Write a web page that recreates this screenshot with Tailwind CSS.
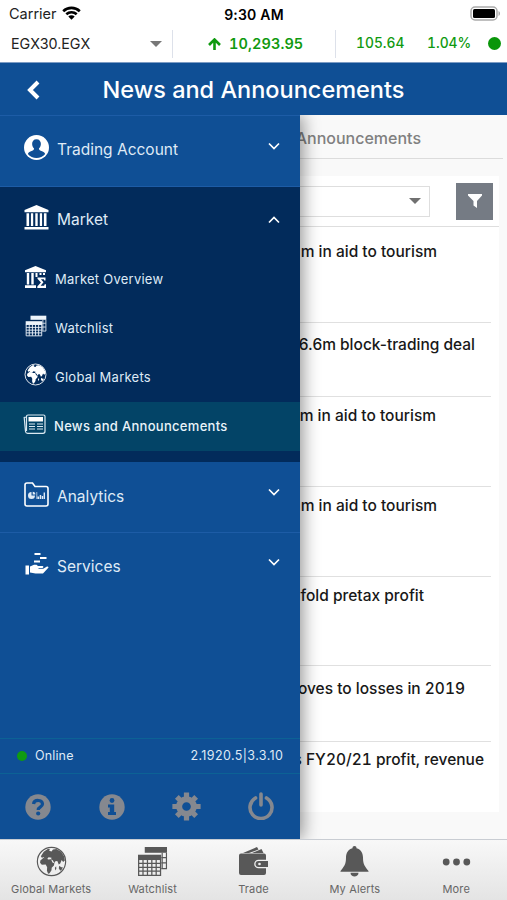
<!DOCTYPE html>
<html lang="en">

<head>
    <meta charset="UTF-8">
    <meta name="viewport" content="width=device-width, initial-scale=1.0">
    <title>News and Announcements</title>
    <script src="https://cdn.jsdelivr.net/npm/@tailwindcss/browser@4"></script>
</head>

<body class="w-[507px] h-[900px] overflow-hidden flex flex-col bg-white font-['Inter',sans-serif] text-[#222]">
    <!-- Shared icons -->
    <svg class="hidden">
        <symbol id="i-globe" viewBox="0 0 32 32">
            <circle cx="16" cy="16" r="14.6" fill="none" stroke="currentColor" stroke-width="1.2" />
            <path fill="currentColor" d="M5 10.500L8 6l4.500-3.200 2 .7-1 1.500 2.500.6 1.500-2L21 3l5 3 3.200 5 .6 4-1.800 1.500-1.500-2-1.500 3.500-1.500 1-1.500-3.500-2 .2-1 1.800-2-3-1.500-.5.5-2-3-.5-1.500 1.800-2.500-.2-1-1.500-2 .5z" />
            <path fill="currentColor" d="M4.500 15l3-2.600 3.500.3 1.500 1.300 3-.2 1.500 3.200 2 .8-.5 2.200-2.300 2.500-.2 2.500-2 3.200-1.500.5-1.200-3.200.2-3.500-1.500-2.800-4 .2-1.800-2z" />
            <path fill="currentColor" d="M19.500 22.500l1.300-1.500.2 2.500-1.200 1.700zM24 20.500l2 1.500 1.500-.2-.5 2.200-2 1.500-1.500-2.500z" />
        </symbol>
        <symbol id="i-tables" viewBox="0 0 32 32">
            <path fill="currentColor" d="M8 1h23v6H8z" />
            <path fill="none" stroke="currentColor" stroke-width="1.200" d="M30.400 7v16.400H25M26 7v16M25 12h5M25 17.500h5" />
            <path fill="currentColor" d="M1 9h24v5.500H1z" />
            <path fill="none" stroke="currentColor" stroke-width="1.300" d="M1.700 14v16.300h22.600V14M1.700 18h22.600M1.700 22h22.600M1.700 26h22.600M6.200 14v16M10.800 14v16M15.300 14v16M19.800 14v16" />
        </symbol>
        <symbol id="i-down" viewBox="0 0 12 8">
            <path fill="none" stroke="currentColor" stroke-width="1.700" d="M1 1.500l5 5 5-5" />
        </symbol>
    </svg>

    <!-- Status bar -->
    <div class="h-7 shrink-0 grid grid-cols-3 items-center pl-[9px] pr-[7px] text-[14.500px]">
        <div class="flex items-center gap-[5px]">
            <span>Carrier</span>
            <svg class="w-[19px] h-[14px] -mt-[2px] text-black" viewBox="0 0 19 14" fill="none" stroke="currentColor" stroke-width="2.600">
                <path d="M1.200 5.200a12 12 0 0 1 16.600 0M4.300 8.300a7.600 7.600 0 0 1 10.400 0" />
                <path d="M6.300 10.600a4.600 4.600 0 0 1 6.400 0L9.500 13.800z" fill="currentColor" stroke="none" />
            </svg>
        </div>
        <div class="text-center font-semibold text-[14px] tracking-[0.200px] -ml-[1px] text-black">9:30 AM</div>
        <svg class="w-[30px] h-[15px] -mt-[2px] justify-self-end" viewBox="0 0 30 15">
            <rect x="1" y="1" width="26" height="13" rx="4" fill="none" stroke="#aaa" stroke-width="1.500" />
            <rect x="3" y="3" width="22" height="9" rx="1.500" fill="#000" />
            <path d="M28.500 5c2 1 2 4 0 5z" fill="#aaa" />
        </svg>
    </div>

    <!-- Ticker -->
    <div class="h-[34px] shrink-0 flex items-start pt-[2px] text-[14.500px] text-[#109a10]">
        <div class="w-[173px] h-7 flex items-center justify-between pl-[11px] pr-[10px] pb-[1px] border-r border-[#dde1ea] text-[#222]">
            <span class="text-[14.300px]">EGX30.EGX</span>
            <svg class="w-3 h-[6px] text-[#777]" viewBox="0 0 12 6"><path fill="currentColor" d="M0 0h12L6 6z" /></svg>
        </div>
        <div class="w-[163px] h-7 flex items-center gap-[8px] pl-[35px] pb-[1px] border-r border-[#dde1ea] font-semibold tabular-nums">
            <svg class="w-[13px] h-3" viewBox="0 0 13 12" fill="none" stroke="currentColor" stroke-width="2.600"><path d="M6.500 12V2M1 7l5.500-5.500L12 7" /></svg>
            <span class="tracking-[0.100px]">10,293.95</span>
        </div>
        <div class="flex-1 h-7 flex items-center pl-5 pr-[6px] pb-[1px] font-medium text-[13.800px] tabular-nums">
            <span class="w-[71px]">105.64</span>
            <span>1.04%</span>
            <span class="ml-auto w-[13px] h-[13px] rounded-full bg-[#0a960a]"></span>
        </div>
    </div>

    <!-- Title bar -->
    <header class="h-[53px] shrink-0 grid grid-cols-[102px_1fr_102px] items-center pt-[2px] border-t border-[#7d9cc4] bg-[#0f4f95] text-white">
        <svg class="w-[14px] h-5 ml-[26px]" viewBox="0 0 14 20" fill="none" stroke="currentColor" stroke-width="4"><path d="M12 2l-8 8 8 8" /></svg>
        <h1 class="text-center text-[23.500px] font-medium whitespace-nowrap">News and Announcements</h1>
    </header>

    <div class="flex-1 min-h-0 flex overflow-hidden">
        <!-- Drawer -->
        <aside class="w-[300px] shrink-0 flex flex-col relative z-10 bg-[#0f4f95] text-[#dfeaf6] text-[15.500px] border-t border-[#1d5ca6] shadow-[3px_0_16px_rgba(0,0,0,0.42)]">
            <div class="h-[70px] flex items-center pl-6 pr-5 pb-[8px]">
                <svg class="w-[25px] h-[25px]" viewBox="0 0 24 24">
                    <circle cx="12" cy="12" r="12" fill="#fff" />
                    <path fill="#0f4f95" d="M12 4c2.800 0 4.300 2 4.200 4.700-.1 1.900-.9 3.400-1.900 4.300.1 1.600 1.200 2 3 2.700 1.500.6 2.500 1.300 3 2.600-4 5-12.600 5-16.600 0 .5-1.300 1.500-2 3-2.600 1.800-.7 2.900-1.100 3-2.700-1-.9-1.800-2.400-1.900-4.300C7.700 6 9.200 4 12 4z" />
                </svg>
                <span class="ml-[8px] mt-[5px]">Trading Account</span>
                <svg class="w-3 h-2 ml-auto -mt-[3px] text-white"><use href="#i-down" /></svg>
            </div>

            <div class="h-[276px] bg-[#022b5b] border-t border-[#1d5ca6]">
                <div class="h-[68px] flex items-center pl-6 pr-5 pb-[6px]">
                    <svg class="w-[25px] h-[25px] -mt-[2px]" viewBox="0 0 25 25" fill="#fff">
                        <path d="M12.500 0L24.500 5v2.200H.5V5zM.5 22h24v2.500H.5zM2.500 8.200h2.600V21H2.500zM6.900 8.200h2.300V21H6.900zM11.300 8.200h2.400V21h-2.400zM15.800 8.200h2.300V21h-2.300zM19.900 8.200h2.600V21h-2.600z" />
                    </svg>
                    <span class="ml-[8px] mt-[3px]">Market</span>
                    <svg class="w-3 h-2 ml-auto mt-[3px] rotate-180 text-white"><use href="#i-down" /></svg>
                </div>
                <div class="text-[13px] tracking-[0.250px]">
                    <div class="h-[49px] flex items-center pl-[25px]">
                        <svg class="w-[22px] h-[22px] -mt-[5px]" viewBox="0 0 22 22" fill="#fff">
                            <path d="M10.500 0L21 4.300v2H0v-2zM1.800 7h2.400v11.500H1.800zM6.300 7h2.400v11.500H6.300zM10.500 7h2v4h-2zM14.500 7h2v2h-2zM18 7h2v2h-2zM0 19.300h11V22H0z" />
                            <path d="M12.500 11.500h8v3h-1.200l-.4-1.200h-3l2.600 3-2.900 3.400h3.500l.6-1.500H21V22h-8.700v-1.400l3.600-4.100-3.400-3.800z" />
                        </svg>
                        <span class="ml-2">Market Overview</span>
                    </div>
                    <div class="h-[49px] flex items-center pl-[25px]">
                        <svg class="w-[22px] h-[22px] -mt-[6px] text-[#edf4fb]"><use href="#i-tables" /></svg>
                        <span class="ml-2">Watchlist</span>
                    </div>
                    <div class="h-[49px] flex items-center pl-6">
                        <svg class="w-[23px] h-[23px] -mt-[6px] text-white"><use href="#i-globe" /></svg>
                        <span class="ml-2">Global Markets</span>
                    </div>
                    <div class="h-[49px] flex items-center pl-[23px] bg-[#034467] font-medium tracking-[0.300px] text-[#e9f3f9]">
                        <svg class="w-[23px] h-[20px] -mt-[6px]" viewBox="0 0 22 20" fill="none" stroke="#dbe9f2" stroke-width="1.200">
                            <path d="M3 3L.7 3.500 2 17.500c.2 1.300 1 1.800 2.200 1.800H19.500a2 2 0 0 0 2-2V2.500a1.500 1.500 0 0 0-1.500-1.500H4.500A1.500 1.500 0 0 0 3 2.500V17" />
                            <path fill="#fff" stroke="none" d="M5 3h14.500v4.500H5z" />
                            <path d="M5.500 10h6M5.500 12.500h6M5.500 15h6M13.500 10h6M13.500 12.500h6M13.500 15h6" />
                        </svg>
                        <span class="ml-2">News and Announcements</span>
                    </div>
                </div>
            </div>

            <div class="h-[70px] flex items-center pl-6 pr-5 pb-[6px]">
                <svg class="w-[25px] h-[25px]" viewBox="0 0 25 25">
                    <path fill="none" stroke="#fff" stroke-width="1.600" d="M1 3a2 2 0 0 1 2-2h5.500l2.500 3.500h11a2 2 0 0 1 2 2V22a2 2 0 0 1-2 2H3a2 2 0 0 1-2-2z" />
                    <path fill="#dfeaf6" d="M7.500 10a3.500 3.500 0 1 0 3.500 3.500H7.500zM8.700 9.700v2.700h2.600a2.600 2.600 0 0 0-2.600-2.700zM12.500 10h.7v7h-.7zM13.500 14.500h1.600V17h-1.600zM15.700 13h1.500v4h-1.500zM17.800 14h1.300v3h-1.300zM19.600 10.500h1.400V17h-1.400z" />
                </svg>
                <span class="ml-[8px] mt-[5px]">Analytics</span>
                <svg class="w-3 h-2 ml-auto -mt-[4px] text-white"><use href="#i-down" /></svg>
            </div>
            <div class="h-[70px] flex items-center pl-6 pr-5 pb-[6px] border-t border-[#1d5ca6]">
                <svg class="w-[25px] h-[25px] -mt-[2px]" viewBox="0 0 25 25" fill="#fff">
                    <path d="M10.500 2h6v2h-6zM16 6h6.500v2H16zM10 9.500h6v2h-6zM1.500 14.500H5v9H1.500z" />
                    <path d="M6 15.500l4-1.800h2.500l1.500 1.300h4.500c1.200 0 1.200 1.900 0 1.900h-4v.9h4.700l3.800-2.300c1-.5 2 .7 1.100 1.600L19 22.500h-7.500L6 21.500z" />
                </svg>
                <span class="ml-[8px] mt-[5px]">Services</span>
                <svg class="w-3 h-2 ml-auto -mt-[5px] text-white"><use href="#i-down" /></svg>
            </div>

            <div class="mt-auto h-[36px] flex items-center justify-between pl-[17px] pr-[17px] border-y border-[#0c6295] text-[12.500px]">
                <div class="flex items-center gap-[8px] tracking-[0.150px]">
                    <span class="w-[10px] h-[10px] rounded-full bg-[#109b10]"></span>
                    <span>Online</span>
                </div>
                <span class="tracking-[0.400px] -mr-[0.400px]">2.1920.5|3.3.10</span>
            </div>
            <div class="h-[65px] flex items-center justify-between pl-[25px] pr-[26px] text-[#85888f]">
                <svg class="w-[26px] h-[26px]" viewBox="0 0 26 26">
                    <circle cx="13" cy="13" r="12.700" fill="currentColor" />
                    <path fill="none" stroke="#0f4f95" stroke-width="3.200" d="M8.500 10c.6-4.800 9-4.600 9 0 0 3-4.300 2.600-4.300 6" />
                    <circle cx="13.200" cy="19.500" r="2.100" fill="#0f4f95" />
                </svg>
                <svg class="w-[26px] h-[26px] ml-[1px]" viewBox="0 0 26 26">
                    <circle cx="13" cy="13" r="12.700" fill="currentColor" />
                    <path fill="#0f4f95" d="M9 10.500h6.200v7.500H17v3H9v-3h1.800v-4.500H9z" />
                    <circle cx="13" cy="6.500" r="2.400" fill="#0f4f95" />
                </svg>
                <svg class="w-[29px] h-[29px]" viewBox="-15 -15 30 30" stroke="currentColor" fill="none">
                    <circle r="7.600" stroke-width="6.200" />
                    <path stroke-width="5.400" d="M0-14.600V-9M0 9v5.600M-14.600 0H-9M9 0h5.600M-10-10l3.400 3.400M10 10L6.600 6.600M-10 10l3.400-3.400M10-10L6.600-6.600" />
                </svg>
                <svg class="w-[26px] h-[28px] -mt-[1px]" viewBox="0 0 26 28" stroke="currentColor" fill="none" stroke-width="3.600" stroke-linecap="round">
                    <path d="M7.500 6a11 11 0 1 0 11 0M13 2v11" />
                </svg>
            </div>
        </aside>

        <!-- News list, partly under the drawer -->
        <main class="flex-1 min-w-0 overflow-hidden bg-[#f9f9f9] pr-2">
            <div class="h-[44px] -mr-1 flex items-center justify-end pt-[2px] pr-[82px] border-b border-[#dcdcdc] text-[16px] font-medium text-[#808080] whitespace-nowrap">
                <span>Announcements</span>
            </div>
            <section class="mt-[17px] h-[636px] bg-white">
                <div class="h-[51px] flex items-center justify-end gap-[26px] pr-[6px] border-b border-[#dedede]">
                    <div class="flex-1 h-[31px] flex items-center justify-end pr-2 border border-l-0 border-[#dedede]">
                        <svg class="w-3 h-[6px] text-[#707070]" viewBox="0 0 12 6"><path fill="currentColor" d="M0 0h12L6 6z" /></svg>
                    </div>
                    <div class="w-[37px] h-[37px] flex items-center justify-center bg-[#757b84]">
                        <svg class="w-[14px] h-[14px]" viewBox="0 0 14 14" fill="#fff"><path d="M0 0h14v1.500L9 7v7l-3.500-2.500V7L0 1.500z" /></svg>
                    </div>
                </div>
                <ul class="mr-2 text-[15.500px] font-medium text-[#181818] whitespace-nowrap">
                    <li class="h-[96px] flex justify-end pt-[13px] pr-[54px] border-b border-[#e0e0e0]"><span>m in aid to tourism</span></li>
                    <li class="h-[74px] flex justify-end pt-[10px] pr-[16px] border-b border-[#e0e0e0]"><span>6.6m block-trading deal</span></li>
                    <li class="h-[90px] flex justify-end pt-[7px] pr-[55px] border-b border-[#e0e0e0]"><span>m in aid to tourism</span></li>
                    <li class="h-[90px] flex justify-end pt-[7px] pr-[54px] border-b border-[#e0e0e0]"><span>m in aid to tourism</span></li>
                    <li class="h-[89px] flex justify-end pt-[7px] pr-[67px] border-b border-[#e0e0e0]"><span>fold pretax profit</span></li>
                    <li class="h-[76px] flex justify-end pt-[11px] pr-[26px] border-b border-[#e0e0e0] tabular-nums"><span>oves to losses in 2019</span></li>
                    <li class="flex justify-end pt-[6px] pr-[7px] tabular-nums"><span>s FY20/21 profit, revenue</span></li>
                </ul>
            </section>
        </main>
    </div>

    <!-- Tab bar -->
    <nav class="h-[61px] shrink-0 grid grid-cols-5 pt-[6px] border-t border-[#c9cdd3] bg-linear-to-b from-[#f8f8f8] to-[#e4e4e4] text-[11px] tracking-[0.150px] text-[#666]">
        <div class="flex flex-col items-center gap-[4px] pl-[1px]">
            <svg class="w-[31px] h-[31px] text-[#585858]"><use href="#i-globe" /></svg>
            <span>Global Markets</span>
        </div>
        <div class="flex flex-col items-center gap-[4px] pl-[1px]">
            <svg class="w-[31px] h-[31px] text-[#585858]"><use href="#i-tables" /></svg>
            <span>Watchlist</span>
        </div>
        <div class="flex flex-col items-center gap-[4px]">
            <svg class="w-[31px] h-[31px]" viewBox="0 0 31 31" fill="#585858">
                <path d="M5 7L19 1l1.500 2.500L11 7zM14 7l9.500-4 2 4z" />
                <path d="M3 7.500h23a2 2 0 0 1 2 2v4.200h-7.500a3.700 3.700 0 0 0 0 8.600H28V27a2 2 0 0 1-2 2H3a2 2 0 0 1-2-2V9.500a2 2 0 0 1 2-2z" />
                <path d="M20.500 15H30v6h-9.500a3 3 0 0 1 0-6z" />
                <circle cx="21.500" cy="18" r="1.300" fill="#eee" />
            </svg>
            <span>Trade</span>
        </div>
        <div class="flex flex-col items-center gap-[4px]">
            <svg class="w-[31px] h-[31px]" viewBox="0 0 31 31" fill="#585858">
                <path d="M15.500 0a2 2 0 0 1 2 2.200C22 3.500 24 7 24 11.500c0 7 2 9 5.500 13.500v.8h-28V25C5 20.500 7 18.500 7 11.500 7 7 9 3.500 13.500 2.200a2 2 0 0 1 2-2.200zM11.500 26.800h8c0 5-8 5-8 0z" />
            </svg>
            <span>My Alerts</span>
        </div>
        <div class="flex flex-col items-center gap-[4px]">
            <svg class="w-[31px] h-[31px]" viewBox="0 0 31 31" fill="#585858">
                <circle cx="5.200" cy="16" r="3.400" /><circle cx="15.500" cy="16" r="3.400" /><circle cx="25.800" cy="16" r="3.400" />
            </svg>
            <span>More</span>
        </div>
    </nav>
</body>

</html>
